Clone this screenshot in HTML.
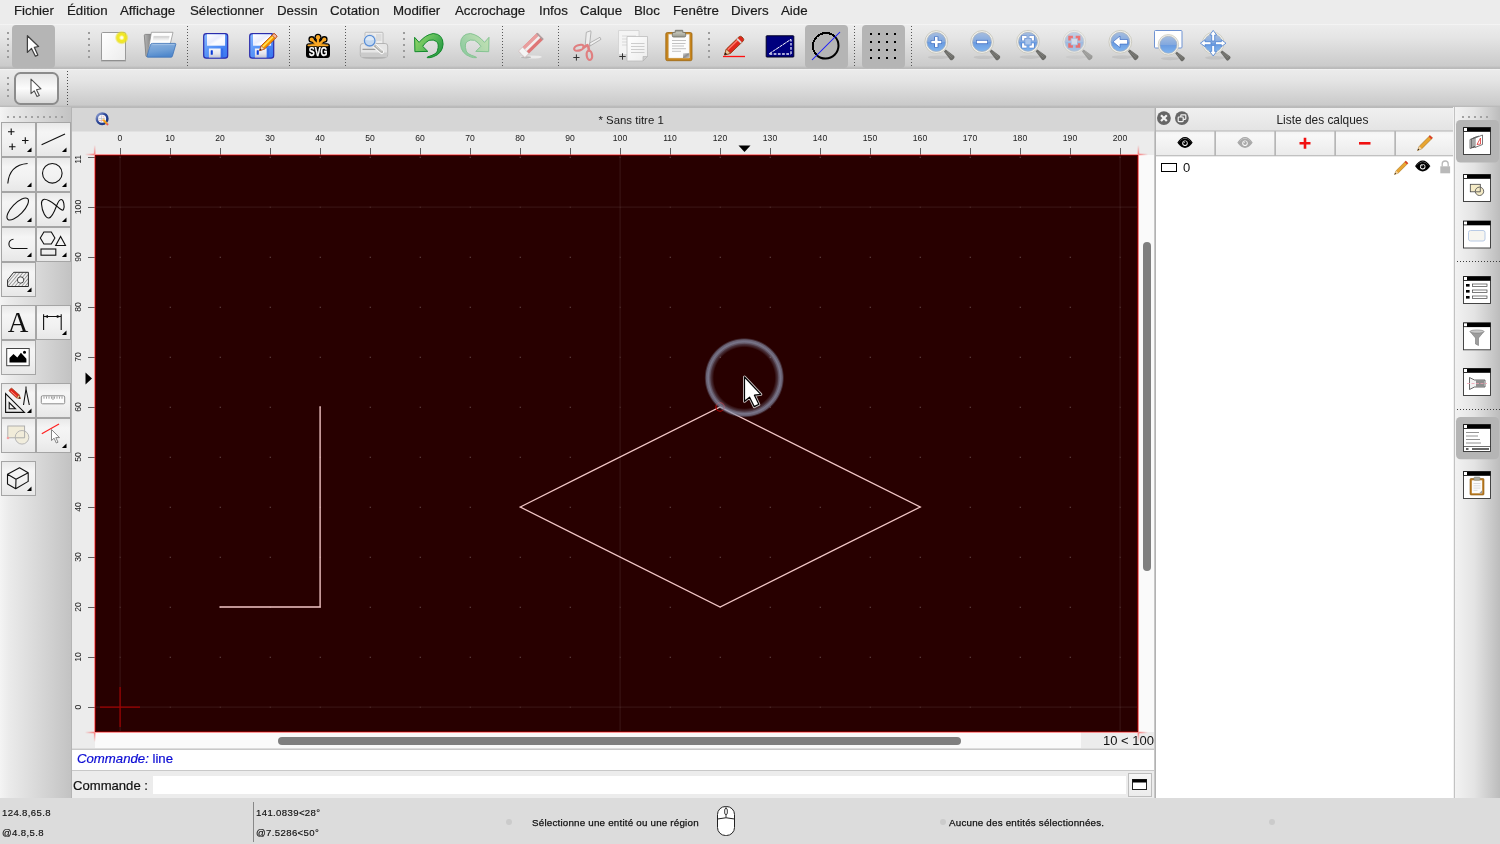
<!DOCTYPE html>
<html><head><meta charset="utf-8"><title>QCAD</title>
<style>
*{box-sizing:border-box;margin:0;padding:0}
html,body{width:1500px;height:844px;overflow:hidden;background:#dcdcdc;font-family:"Liberation Sans",sans-serif;color:#111}
.abs,#app *{position:absolute}
#app{position:relative;width:1500px;height:844px;overflow:hidden;will-change:transform}
#menubar{left:0;top:0;width:1500px;height:24px;background:#ececec}
#menubar span{top:2px;font-size:13.3px;line-height:17px;color:#1c1c1c;white-space:nowrap;-webkit-text-stroke:.2px #1c1c1c}
#tb1{left:0;top:24px;width:1500px;height:45px;background:linear-gradient(#f7f7f7 0,#ececec 1.5px,#e5e5e5 30%,#d4d4d4 70%,#cbcbcb 93%,#bcbcbc 97%,#b9b9b9 100%)}
#tb2{left:0;top:69px;width:1500px;height:39px;background:linear-gradient(#f5f5f5 0,#ebebeb 1.5px,#e4e4e4 30%,#d3d3d3 70%,#cacaca 92%,#bbbbbb 96%,#b8b8b8 100%)}
.sepv{width:1px;border-left:1px dotted #555;top:4px;height:38px}
.grip{width:2px;top:9px;height:28px;background-image:radial-gradient(circle,#9a9a9a 0.9px,transparent 1.2px);background-size:2px 6px}
#leftpanel{left:0;top:107px;width:72px;height:691px;background:linear-gradient(90deg,#f4f4f4 0,#ebebeb 12%,#dddddd 42%,#cecece 75%,#c2c2c2 100%)}
.tbtn{width:35px;height:35px;background:linear-gradient(#fbfbfb,#ececec);border:1px solid #b9b9b9}
#tabbar{left:72px;top:108px;width:1082px;height:23px;background:#d6d6d6}
#rulerh{left:72px;top:131px;width:1082px;height:24px;background:#ececec;overflow:hidden}
#rulerv{left:72px;top:155px;width:23px;height:593px;background:#ececec;overflow:hidden}
.th{width:1px;height:7px;top:17px;background:#606060}
.lh{width:40px;text-align:center;top:1px;font-size:8.6px;line-height:12px;color:#222}
.tv{height:1px;width:7px;left:16px;background:#606060}
.lv{width:40px;height:12px;text-align:center;font-size:8.6px;line-height:12px;color:#222;left:-14px;transform:rotate(-90deg);transform-origin:50% 50%;margin-top:14px}
#canvas{left:95px;top:155px;width:1043px;height:577px;background:#280000;overflow:hidden}
#vscroll{left:1139px;top:155px;width:15px;height:577px;background:#fafafa}
#hscroll{left:95px;top:732px;width:986px;height:16px;background:#fafafa}
#zoomlbl{left:1081px;top:732px;width:73px;height:16px;background:#ececec;font-size:13px;line-height:16px;text-align:right;padding-right:1px;color:#111}
#cmdhist{left:72px;top:749px;width:1082px;height:22px;background:#fff;border-top:1px solid #c8c8c8;border-bottom:1px solid #c8c8c8}
#cmdline{left:72px;top:771px;width:1082px;height:27px;background:#ececec}
#status{left:0;top:798px;width:1500px;height:46px;background:#dcdcdc}
#status span{font-size:9.6px;color:#111;white-space:nowrap;letter-spacing:.36px;-webkit-text-stroke:.15px #111}
#rightpanel{left:1155px;top:108px;width:299px;height:690px;background:#fff}
#rptitle{left:1px;top:0;width:298px;height:22px;background:linear-gradient(#f0f0f0,#e4e4e4);font-size:11.9px;line-height:22px;color:#222}
.lbtn{top:23px;height:25px;width:59px;background:linear-gradient(#f7f7f7,#ebebeb);border:1px solid #c4c4c4}
#righttb{left:1453px;top:107px;width:47px;height:691px;background:linear-gradient(90deg,#f2f2f2 2px,#e4e4e4 45%,#bcbcbc)}
.wbtn{left:9px;width:30px;height:30px;background:#fff;border:1px solid #444}
.wbtn:before{content:"";position:absolute;left:0;top:0;right:0;height:4px;background:#000}
.wbtn:after{content:"";position:absolute;left:0;top:0;width:3px;height:3px;background:#fff;border-right:1px solid #000;border-bottom:1px solid #000}
.sel{background:#bcbcbc;border-radius:5px}
svg{overflow:visible}
</style></head><body>
<div id="app">

<!-- MENUBAR -->
<div id="menubar">
<span style="left:14px">Fichier</span>
<span style="left:67px">Édition</span>
<span style="left:120px">Affichage</span>
<span style="left:190px">Sélectionner</span>
<span style="left:277px">Dessin</span>
<span style="left:330px">Cotation</span>
<span style="left:393px">Modifier</span>
<span style="left:455px">Accrochage</span>
<span style="left:539px">Infos</span>
<span style="left:580px">Calque</span>
<span style="left:634px">Bloc</span>
<span style="left:673px">Fenêtre</span>
<span style="left:731px">Divers</span>
<span style="left:781px">Aide</span>
</div>

<!-- TOOLBAR 1 -->
<div id="tb1">
<svg style="left:0;top:-1px" width="1500" height="46" viewBox="0 23 1500 46">
<defs>
<linearGradient id="gBlue" x1="0" y1="0" x2="0" y2="1"><stop offset="0" stop-color="#a5bde0"/><stop offset=".5" stop-color="#82a8de"/><stop offset=".52" stop-color="#6a9be0"/><stop offset="1" stop-color="#80b4ee"/></linearGradient>
<linearGradient id="gFlop" x1="0" y1="0" x2="1" y2=".8"><stop offset="0" stop-color="#8dbbff"/><stop offset=".45" stop-color="#5a96f8"/><stop offset="1" stop-color="#3b78f0"/></linearGradient><linearGradient id="gLbl" x1="0" y1="0" x2="1" y2="1"><stop offset="0" stop-color="#fff"/><stop offset=".45" stop-color="#e9ecfd"/><stop offset=".6" stop-color="#fbfbff"/><stop offset="1" stop-color="#f2f4ff"/></linearGradient><linearGradient id="gShut" x1="0" y1="0" x2="0" y2="1"><stop offset="0" stop-color="#f6f6fa"/><stop offset=".6" stop-color="#e2e2ea"/><stop offset="1" stop-color="#c2c2d0"/></linearGradient>
<linearGradient id="gPage" x1="0" y1="0" x2="1" y2="1"><stop offset="0" stop-color="#ffffff"/><stop offset="1" stop-color="#ececec"/></linearGradient>
<radialGradient id="gGlow"><stop offset="0" stop-color="#fff"/><stop offset=".15" stop-color="#fffde0"/><stop offset=".4" stop-color="#f4ea20"/><stop offset=".7" stop-color="#ece21c" stop-opacity=".9"/><stop offset="1" stop-color="#e8dc2a" stop-opacity="0"/></radialGradient>
<linearGradient id="gFolder" x1="0" y1="0" x2=".3" y2="1"><stop offset="0" stop-color="#8db2de"/><stop offset=".6" stop-color="#6f9fd6"/><stop offset="1" stop-color="#5088cc"/></linearGradient>
<linearGradient id="gGreen" x1="0" y1="0" x2="1" y2=".6"><stop offset="0" stop-color="#9bd868"/><stop offset=".55" stop-color="#5fbd5c"/><stop offset="1" stop-color="#2c9c45"/></linearGradient>
<linearGradient id="gGreenL" x1="0" y1="0" x2="1" y2=".6"><stop offset="0" stop-color="#c5e3b5"/><stop offset=".55" stop-color="#add7ac"/><stop offset="1" stop-color="#8fcba0"/></linearGradient>
<g id="lens">
<ellipse cx="2" cy="15.300" rx="10.500" ry="1.800" fill="#000" opacity=".07"/>
<path d="M7.600 9.400l1.800-1.800 8.300 6.200q1.300 1.300 0 2.600l-1.300 1.300q-1.300 1.300-2.600 0z" fill="#6b6b67"/>
<path d="M9.500 10.300l6 5.300M10.800 9.300l5.700 5" stroke="#8b8b86" stroke-width=".7"/>
<circle r="11.400" fill="#f1f0ea" stroke="#c4c3b7" stroke-width=".8"/>
<circle r="9.500" fill="url(#gBlue)" stroke="#a3adba" stroke-width=".7"/>
</g>
<g id="grip5" fill="#9c9c9c"><rect x="0" y="32" width="2" height="2"/><rect x="0" y="38" width="2" height="2"/><rect x="0" y="44" width="2" height="2"/><rect x="0" y="50" width="2" height="2"/><rect x="0" y="56" width="2" height="2"/></g>
<path id="sepd" d="M.5 26V67" stroke="#565656" stroke-width="1" stroke-dasharray="1 2" shape-rendering="crispEdges"/>
</defs>

<!-- pointer selected -->
<rect x="12" y="25" width="43" height="43" rx="4" fill="#b5b5b5"/>
<path d="M27.400 35.700V52.400L31.500 48.500L35.400 56.200L37.800 55.100L34.300 47.300L38.600 46.500Z" fill="#fff" stroke="#404040" stroke-width="1.250" stroke-linejoin="round"/>
<use href="#grip5" x="7"/>
<use href="#grip5" x="88"/>

<!-- new -->
<g>
<rect x="101.5" y="32.5" width="24" height="28" rx="1.2" fill="url(#gPage)" stroke="#9a9a9a" stroke-width="1"/>
<path d="M101 60.8h25" stroke="#8a8a8a" stroke-width="1"/>
<circle cx="121.7" cy="37.7" r="7" fill="url(#gGlow)"/>
</g>

<!-- open -->
<g>
<defs><linearGradient id="gBack" x1="0" y1="0" x2="1" y2="0"><stop offset="0" stop-color="#b5b5b5"/><stop offset="1" stop-color="#7e7e7e"/></linearGradient>
<linearGradient id="gPap" x1="0" y1="0" x2="0" y2="1"><stop offset="0" stop-color="#fff"/><stop offset=".25" stop-color="#c9c9c9"/><stop offset=".55" stop-color="#e2e2e2"/><stop offset="1" stop-color="#fafafa"/></linearGradient></defs>
<path d="M144.300 35.500q0-1.100 1.100-1.100h6.500l-3.500 22.200h-1.600q-.8 0-.9-.8z" fill="url(#gBack)" stroke="#6f6f6f" stroke-width=".7"/>
<path d="M151.400 32.300h21.600l-2.700 11.500-22.500 9.500z" fill="#fdfdfd" stroke="#8d8d8d" stroke-width=".7" stroke-linejoin="round"/>
<path d="M153.800 35.300h16l-1.300 5.600h-15.900z" fill="url(#gPap)" opacity=".9"/>
<path d="M152.600 43.400h22.400q1 0 .8 1l-3.400 11.800q-.3 1-1.300 1h-23.300q-1 0-.8-1l3.400-11.500q.4-1.300 2.200-1.300z" fill="url(#gFolder)" stroke="#3f74b8" stroke-width=".8"/>
<path d="M152.300 44.600h22.200" stroke="#a9c6e8" stroke-width=".8"/>
</g>
<use href="#sepd" x="187"/>

<!-- save -->
<g id="floppy">
<rect x="203.700" y="33.600" width="24" height="24.600" rx="2.600" fill="url(#gFlop)" stroke="#2b2bab" stroke-width="1.200"/>
<rect x="221" y="48.500" width="2.200" height="9" fill="#2f66e8" opacity=".8"/>
<path d="M207 34.300h18.100v11.400h-18.100z" fill="url(#gLbl)"/>
<path d="M208.900 48.500h11.700v9.100h-11.700z" fill="url(#gShut)"/>
<rect x="210.700" y="50.300" width="2.100" height="4.500" rx=".5" fill="#0a3ad8"/>
</g>
<!-- save as -->
<use href="#floppy" x="46"/>
<g transform="translate(259.600,50.600) rotate(-44.500)">
<path d="M0 0l4.600-2.300h16.200q1.800 0 1.800 1.200v2.200q0 1.200-1.800 1.200h-16.200z" fill="#ffb400" stroke="#b23a08" stroke-width=".8" stroke-linejoin="round"/>
<path d="M4.800-.5h15" stroke="#ffe36a" stroke-width="1.300"/>
<path d="M4.800 1.300h15" stroke="#f08a00" stroke-width="1"/>
<path d="M19.600-2.300h1.200q1.800 0 1.800 1.200v2.200q0 1.200-1.800 1.200h-1.200z" fill="#f3b69a" stroke="#b23a08" stroke-width=".6"/>
<path d="M0 0l4.600-2.300v4.600z" fill="#f6dfc0" stroke="#b23a08" stroke-width=".5"/><path d="M0 0l1.900-.95v1.900z" fill="#2a2a2a"/>
</g>
<use href="#sepd" x="289"/>

<!-- SVG -->
<g>
<g fill="#000" stroke="#000" stroke-width="2.400" stroke-linecap="round">
<circle cx="318" cy="37.200" r="2.300"/><circle cx="311.700" cy="39.400" r="2.100"/><circle cx="324.300" cy="39.400" r="2.100"/>
<path d="M318 37.200v8M311.700 39.400l6.300 6M324.300 39.400l-6.300 6" stroke-width="4.600"/>
</g>
<rect x="306" y="43.300" width="24" height="14.700" rx="3.200" fill="#000"/>
<g fill="#f9a825"><circle cx="318" cy="37.200" r="2.200"/><circle cx="311.700" cy="39.400" r="2"/><circle cx="324.300" cy="39.400" r="2"/></g>
<path d="M318 37.200v8M311.700 39.400l5.800 5.600M324.300 39.400l-5.800 5.600" stroke="#f9a825" stroke-width="2.400" stroke-linecap="round"/>
<path d="M308.300 45.300h19.400" stroke="#f9a825" stroke-width="1.700" stroke-linecap="round"/>
<path d="M309.500 44.800q8.500-3.500 17 0z" fill="#f9a825"/>
<text x="318.100" y="56.100" font-family="Liberation Sans, sans-serif" font-weight="bold" font-size="12.400" fill="#fff" stroke="#fff" stroke-width=".25" text-anchor="middle" textLength="18.800" lengthAdjust="spacingAndGlyphs">SVG</text>
</g>
<use href="#sepd" x="345"/>

<!-- print preview -->
<g>
<rect x="365" y="32.300" width="18" height="13" rx=".8" fill="#ededed" stroke="#b0b0b0" stroke-width=".8"/>
<rect x="376" y="34" width="5.500" height="7" fill="#dcdcdc"/>
<ellipse cx="374" cy="57.800" rx="12" ry="1.500" fill="#000" opacity=".13"/>
<path d="M360.300 46q0-2.500 2.500-2.500h22.400q2.500 0 2.500 2.500v9q0 2.300-2.300 2.300h-22.800q-2.300 0-2.300-2.300z" fill="#e6e6e6" stroke="#a8a8a8" stroke-width=".8"/>
<path d="M360.700 52.500h26.600v2.700q0 1.800-1.900 1.800h-22.800q-1.900 0-1.900-1.800z" fill="#cbcbcb"/>
<path d="M362.500 49.300h13" stroke="#8e8e8e" stroke-width="1.100"/>
<path d="M374.500 45.500l7.300 6.300" stroke="#fff" stroke-width="4.400" stroke-linecap="round"/>
<path d="M374.800 45.800l7 6" stroke="#b3b3b0" stroke-width="2.800" stroke-linecap="round"/>
<path d="M376 46l5.500 4.700" stroke="#dededc" stroke-width="1" stroke-linecap="round"/>
<circle cx="369.700" cy="40.700" r="6.600" fill="#f3f3f3" stroke="#d5d5d5" stroke-width=".6"/>
<circle cx="369.700" cy="40.700" r="5.300" fill="#c3d8f0" stroke="#5b8fd6" stroke-width="1.300"/>
<path d="M365.300 39.800a4.500 4.500 0 0 1 8.800 0q-4.400 1.600-8.800 0z" fill="#e3edf9" opacity=".8"/>
</g>
<use href="#grip5" x="403"/>

<!-- undo -->
<path d="M414.600 37.300L419.100 42.400Q425 35 433.200 33.500Q443 34 443.100 44.200Q442.500 53.500 433.200 56.800Q430 58 427.200 57.700Q427 57 428 56.800Q437 54 437.400 50.800Q439.500 44 436.500 41.500Q433.800 39.200 429 40.300Q425 42.500 422.700 46.300L427.800 51.400L414.900 51.700Z" fill="url(#gGreen)" stroke="#138a2c" stroke-width="1" stroke-linejoin="round"/>
<!-- redo -->
<g transform="translate(903.600,0) scale(-1,1)"><path d="M414.600 37.300L419.100 42.400Q425 35 433.200 33.500Q443 34 443.100 44.200Q442.500 53.500 433.200 56.800Q430 58 427.200 57.700Q427 57 428 56.800Q437 54 437.400 50.800Q439.500 44 436.500 41.500Q433.800 39.200 429 40.300Q425 42.500 422.700 46.300L427.800 51.400L414.900 51.700Z" fill="url(#gGreenL)" stroke="#86c493" stroke-width="1" stroke-linejoin="round"/></g>
<use href="#sepd" x="502"/>

<!-- eraser -->
<g>
<ellipse cx="531" cy="57" rx="11" ry="1.600" fill="#fff" opacity=".55"/>
<ellipse cx="526" cy="57.300" rx="5" ry="1.100" fill="#000" opacity=".22"/>
<g transform="translate(521.700,54.300) rotate(-44.400)">
<rect x="0" y="-4.500" width="26.300" height="9" rx=".8" fill="#de7676"/>
<rect x="0" y="-4.500" width="26.300" height="3.200" fill="#e99e9e"/>
<rect x="0" y="-1.400" width="26.300" height="2.700" fill="#f1efef"/>
<rect x="24.800" y="-4.500" width="1.500" height="9" fill="#a9a0a0"/>
<rect x="0" y="-4.500" width="5.600" height="9" fill="#f4f4f4" stroke="#c4c4c4" stroke-width=".5"/>
</g>
</g>
<use href="#sepd" x="558"/>

<!-- cut -->
<g>
<path d="M585.300 44.700l1-12.400 4.400-1.500.3 1.200-1.700 14.700z" fill="#eeeeee" stroke="#9c9c9c" stroke-width=".7" stroke-linejoin="round"/>
<path d="M589.700 43l10.300-5.700 1 2-11 6.700z" fill="#f0f0f0" stroke="#9c9c9c" stroke-width=".7" stroke-linejoin="round"/>
<path d="M583.500 47.500l4-2.300M588.300 46.500l.7 4" stroke="#e07f80" stroke-width="2.600" stroke-linecap="round"/>
<ellipse cx="579" cy="47.800" rx="5" ry="2.700" transform="rotate(-17 579 47.800)" fill="none" stroke="#e07f80" stroke-width="2.200"/>
<ellipse cx="589.400" cy="55.300" rx="2.700" ry="4.700" transform="rotate(-8 589.400 55.300)" fill="none" stroke="#e07f80" stroke-width="2.200"/>
<path d="M573.300 57.500h6.200M576.400 54.400v6.200" stroke="#333" stroke-width="1"/>
</g>

<!-- copy -->
<g>
<path d="M618.500 30.500h20.500v24h-20.500z" fill="#f4f4f4" stroke="#d0d0d0" stroke-width=".8"/>
<path d="M622 36h14M622 39h14M622 42h14M622 45h14" stroke="#d8d8d8" stroke-width="1"/>
<path d="M627 36.500h20.500v20l-4.500 4.500h-16z" fill="url(#gPage)" stroke="#bdbdbd" stroke-width=".8"/>
<path d="M647.500 56.500h-4.500v4.500z" fill="#cfcfcf" stroke="#b0b0b0" stroke-width=".6"/>
<path d="M631 43.500h13.500M631 46.500h13.500M631 49.500h13.500M631 52.500h13.500" stroke="#cdcdcd" stroke-width="1.100"/>
<path d="M619.300 56.500h6.400M622.500 53.300v6.400" stroke="#333" stroke-width="1"/>
</g>

<!-- paste -->
<g>
<defs><linearGradient id="gClip" x1="0" y1="0" x2="0" y2="1"><stop offset="0" stop-color="#8d8e84"/><stop offset=".35" stop-color="#c2c3b8"/><stop offset="1" stop-color="#96978c"/></linearGradient>
<linearGradient id="gCurl" x1="0" y1="0" x2="1" y2="1"><stop offset="0" stop-color="#d9d9d9"/><stop offset=".5" stop-color="#8d8d8d"/><stop offset="1" stop-color="#c9c9c9"/></linearGradient></defs>
<rect x="665.800" y="32.500" width="26.200" height="28.200" rx="1.600" fill="#c7851d" stroke="#9a6412" stroke-width=".8"/>
<path d="M668.700 34.300h20.600v23.700h-20.600z" fill="#fcfcfc" stroke="#e2d6c0" stroke-width=".5"/>
<path d="M672 40.500h14M672 43.500h13.500M672 46h12M672 48.700h14M672 51.300h9" stroke="#c2c2c2" stroke-width="1"/>
<path d="M683 58v-4.800h6.300v4.800z" fill="url(#gCurl)"/>
<path d="M672.300 34q0-1.700 1.700-1.700h1.300v-2h7.400v2h1.300q1.700 0 1.700 1.700v1.800q0 1.200-1.200 1.200h-11q-1.200 0-1.200-1.200z" fill="url(#gClip)" stroke="#6e6f66" stroke-width=".8"/>
</g>
<use href="#grip5" x="708"/>

<!-- pencil red -->
<g>
<path d="M723 56.500h22" stroke="#ff1010" stroke-width="1.300"/>
<g transform="translate(724.500,55) rotate(-44)">
<path d="M0 0l5.500-3h17q2.600 0 2.600 2.100v1.800q0 2.100-2.600 2.100h-17z" fill="#e0271c" stroke="#8a3a10" stroke-width=".8" stroke-linejoin="round"/>
<path d="M6-1.600h14" stroke="#ff7a6a" stroke-width="1.300"/>
<path d="M19.500-3h1.800v6h-1.800z" fill="#d9d9d9"/>
<path d="M0 0l5.500-3v6z" fill="#e9c79a" stroke="#8a3a10" stroke-width=".6"/><path d="M0 0l2.400-1.300v2.600z" fill="#111"/>
</g>
</g>

<!-- blue rect -->
<g>
<rect x="766.200" y="35.800" width="27.600" height="21.200" rx=".6" fill="#00007e" stroke="#000024" stroke-width="1"/>
<path d="M769.300 53.700l21.700-14.400" stroke="#fff" stroke-width="1" stroke-dasharray="3.500 .6"/>
<path d="M769.500 54h21.500M791 54v-14.500" stroke="#e4e4fa" stroke-width="1.300" stroke-dasharray="2.700 1.500"/>
</g>

<!-- circle slash selected -->
<rect x="805" y="25" width="43" height="43" rx="4" fill="#b5b5b5"/>
<path d="M816.510 54.990A13 13 0 0 1 834.890 36.610" fill="none" stroke="#000" stroke-width="2" shape-rendering="crispEdges"/><path d="M834.890 36.610A13 13 0 0 1 816.510 54.990" fill="none" stroke="#000" stroke-width="2"/>
<path d="M812 60l28-28" stroke="#1414ff" stroke-width="1.050"/>
<use href="#sepd" x="854"/>

<!-- grid selected -->
<rect x="862" y="25" width="43" height="43" rx="4" fill="#b5b5b5"/>
<g fill="#000" shape-rendering="crispEdges">
<rect x="870" y="33" width="2" height="2"/><rect x="878" y="33" width="2" height="2"/><rect x="886" y="33" width="2" height="2"/><rect x="894" y="33" width="2" height="2"/>
<rect x="870" y="41" width="2" height="2"/><rect x="878" y="41" width="2" height="2"/><rect x="886" y="41" width="2" height="2"/><rect x="894" y="41" width="2" height="2"/>
<rect x="870" y="49" width="2" height="2"/><rect x="878" y="49" width="2" height="2"/><rect x="886" y="49" width="2" height="2"/><rect x="894" y="49" width="2" height="2"/>
<rect x="870" y="57" width="2" height="2"/><rect x="878" y="57" width="2" height="2"/><rect x="886" y="57" width="2" height="2"/><rect x="894" y="57" width="2" height="2"/>
</g>
<use href="#sepd" x="911"/>

<!-- zoom in -->
<g transform="translate(936.300,42)"><use href="#lens"/><path d="M-5.500 0h11M0-5.500v11" stroke="#3d6cc0" stroke-width="4.200"/><path d="M-5 0h10M0-5v10" stroke="#fff" stroke-width="2.600"/></g>
<!-- zoom out -->
<g transform="translate(982,42)"><use href="#lens"/><path d="M-5.800 0h11.600" stroke="#3d6cc0" stroke-width="4.200"/><path d="M-5.200 0h10.400" stroke="#fff" stroke-width="2.600"/></g>
<!-- zoom auto -->
<g transform="translate(1028,41.800)"><use href="#lens"/><rect x="-2.700" y="-2.700" width="5.400" height="5.400" fill="#aac5ea"/><path d="M-4.800-1.400V-4.800H-1.400M1.400-4.800H4.800V-1.400M4.800 1.400V4.800H1.400M-1.400 4.800H-4.800V1.400" fill="none" stroke="#3f6fc4" stroke-width="3.300"/><path d="M-4.800-1.400V-4.800H-1.400M1.400-4.800H4.800V-1.400M4.800 1.400V4.800H1.400M-1.400 4.800H-4.800V1.400" fill="none" stroke="#fff" stroke-width="2.300"/></g>
<!-- zoom selection (disabled) -->
<g transform="translate(1074.300,41.800)" opacity=".55"><use href="#lens"/><rect x="-2.700" y="-2.700" width="5.400" height="5.400" fill="#c9d9f0"/><path d="M-4.800-1.400V-4.800H-1.400M1.400-4.800H4.800V-1.400M4.800 1.400V4.800H1.400M-1.400 4.800H-4.800V1.400" fill="none" stroke="#f01818" stroke-width="2.500"/></g>
<!-- zoom previous -->
<g transform="translate(1120.300,41.800)"><use href="#lens"/><path d="M-7.300 0L-.3-5.800V-2.300H7.300V2.300H-.3V5.800Z" fill="#fff" stroke="#3f6fc4" stroke-width=".7" stroke-linejoin="round"/></g>
<!-- zoom window -->
<g>
<rect x="1154.500" y="30.500" width="27.500" height="17.500" rx="1" fill="#fff" stroke="#6f93d3" stroke-width="1"/>
<g transform="translate(1168.400,44.800) scale(.9)"><use href="#lens"/></g>
</g>
<!-- zoom pan -->
<g transform="translate(1213.200,43.200)"><g transform="scale(.95)"><use href="#lens"/></g>
<g fill="#fff" stroke="#4a7fd0" stroke-width=".8" stroke-linejoin="round"><path d="M-1.500-2.200V-8.200H-3.400L0-12.800L3.400-8.200H1.500V-2.200Z"/><path d="M-1.500-2.200V-8.200H-3.400L0-12.800L3.400-8.200H1.500V-2.200Z" transform="rotate(90)"/><path d="M-1.500-2.200V-8.200H-3.400L0-12.800L3.400-8.200H1.500V-2.200Z" transform="rotate(180)"/><path d="M-1.500-2.200V-8.200H-3.400L0-12.800L3.400-8.200H1.500V-2.200Z" transform="rotate(270)"/></g>
</g>
</svg>

</div>

<!-- TOOLBAR 2 -->
<div id="tb2">
<svg style="left:0;top:0" width="1500" height="38" viewBox="0 69 1500 38">
<g fill="#9c9c9c"><rect x="7" y="77" width="2" height="2"/><rect x="7" y="83" width="2" height="2"/><rect x="7" y="89" width="2" height="2"/><rect x="7" y="95" width="2" height="2"/></g>
<defs><linearGradient id="gBtn" x1="0" y1="0" x2="0" y2="1"><stop offset="0" stop-color="#e4e4e4"/><stop offset=".5" stop-color="#fcfcfc"/><stop offset="1" stop-color="#d6d6d6"/></linearGradient></defs>
<rect x="15" y="73" width="43" height="31" rx="5.500" fill="url(#gBtn)" stroke="#8c8c8c" stroke-width="2"/>
<path d="M31 79.200V93.600L34.200 90.800L37 96.600L39.300 95.600L36.500 89.800L41 88.800Z" fill="#fff" stroke="#505050" stroke-width="1.100" stroke-linejoin="round"/>
<path d="M67.500 71V105" stroke="#4a4a4a" stroke-width="1" stroke-dasharray="1 2" shape-rendering="crispEdges"/>
</svg>

</div>

<!-- LEFT PANEL -->
<div id="leftpanel">
<svg style="left:0;top:0" width="72" height="691" viewBox="0 107 72 691">
<defs>
<linearGradient id="gTB" x1="0" y1="0" x2="0" y2="1"><stop offset="0" stop-color="#e8e8e8"/><stop offset=".28" stop-color="#f5f5f5"/><stop offset=".6" stop-color="#f1f1f1"/><stop offset="1" stop-color="#e7e7e7"/></linearGradient>
<g id="tb"><rect x=".5" y=".5" width="34" height="34" fill="url(#gTB)" stroke="#a5a5a5" stroke-width="1"/></g>
<path id="tri" d="M0 0v-4.600l-4.600 4.600z" fill="#000"/>
<pattern id="hat" width="2.600" height="2.600" patternUnits="userSpaceOnUse" patternTransform="rotate(-50)"><rect width="2.600" height="2.600" fill="#f0f0f0"/><rect width="2.600" height=".6" fill="#707070"/></pattern>
</defs>
<g fill="#a2a2a2"><rect x="7" y="116" width="2" height="2"/><rect x="13" y="116" width="2" height="2"/><rect x="19" y="116" width="2" height="2"/><rect x="25" y="116" width="2" height="2"/><rect x="31" y="116" width="2" height="2"/><rect x="37" y="116" width="2" height="2"/><rect x="43" y="116" width="2" height="2"/><rect x="49" y="116" width="2" height="2"/><rect x="55" y="116" width="2" height="2"/><rect x="61" y="116" width="2" height="2"/></g>
<rect x="71" y="107" width="1" height="691" fill="#b4b4b4"/>
<!-- buttons -->
<use href="#tb" x="1" y="122"/><use href="#tb" x="36" y="122"/>
<use href="#tb" x="1" y="157"/><use href="#tb" x="36" y="157"/>
<use href="#tb" x="1" y="192"/><use href="#tb" x="36" y="192"/>
<use href="#tb" x="1" y="227"/><use href="#tb" x="36" y="227"/>
<use href="#tb" x="1" y="262"/>
<use href="#tb" x="1" y="305"/><use href="#tb" x="36" y="305"/>
<use href="#tb" x="1" y="340"/>
<use href="#tb" x="1" y="383"/><use href="#tb" x="36" y="383"/>
<use href="#tb" x="1" y="418"/><use href="#tb" x="36" y="418"/>
<use href="#tb" x="1" y="461"/>
<!-- triangles -->
<use href="#tri" x="31.500" y="152"/><use href="#tri" x="66.500" y="152"/>
<use href="#tri" x="31.500" y="187"/><use href="#tri" x="66.500" y="187"/>
<use href="#tri" x="31.500" y="222"/><use href="#tri" x="66.500" y="222"/>
<use href="#tri" x="31.500" y="257"/><use href="#tri" x="66.500" y="257"/>
<use href="#tri" x="31.500" y="292"/>
<use href="#tri" x="66.500" y="335"/>
<use href="#tri" x="31.500" y="413"/>
<use href="#tri" x="66.500" y="448"/>
<use href="#tri" x="31.500" y="491"/>
<!-- points -->
<g stroke="#111" stroke-width="1.100" fill="none">
<path d="M8 131.700h6.500M11.200 128.500v6.500M22 140.500h6.500M25.300 137.200v6.500M9 146.700h6.500M12.200 143.500v6.500"/>
<!-- line -->
<path d="M41.600 144.800L65 134"/>
<!-- arc -->
<path d="M7.800 183.500q1.500-18.500 19.800-20"/>
<!-- circle -->
<circle cx="52.300" cy="173.300" r="9.800"/>
<!-- ellipse -->
<ellipse cx="17.700" cy="209" rx="14.300" ry="5.700" transform="rotate(-46 17.700 209)"/>
<!-- spline -->
<path d="M41.500 204C42 212 46 218.500 49 218C52 217.500 55 210 56.500 206C58 202 60 199 61.500 199.500C63.500 200 65 206 63.500 209.500C62.500 211.500 59 208 56 205.500C52 202 46 198.500 43.500 199.500C41.500 200.500 41.300 202 41.500 204Z"/>
<!-- polyline J -->
<path d="M13.500 239.300a4.500 4.500 0 0 0 0 9.200h14"/>
<!-- shapes -->
<path d="M40.300 238l3.600-6h7.400l3.600 6-3.600 6h-7.400z"/>
<path d="M60.600 236.500l4.900 9h-9.800z"/>
<rect x="41" y="249" width="14.800" height="6.200"/>
</g>
<!-- hatch -->
<path d="M7.600 280l6.100-7.700h14.700v14.200h-20.800z" fill="url(#hat)" stroke="#2a2a2a" stroke-width="1"/>
<circle cx="20.600" cy="280" r="3.200" fill="#f4f4f4" stroke="#2a2a2a" stroke-width=".85"/>
<!-- A -->
<text x="18" y="331.800" font-family="Liberation Serif, serif" font-size="28.500" text-anchor="middle" fill="#111">A</text>
<!-- dimension -->
<g stroke="#111" stroke-width="1.100" fill="none"><path d="M43.600 314.300v15.700M61.200 314.300v15.700M44 316.500h17"/></g>
<path d="M43.800 316.500l4.200-1.600v3.200zM61 316.500l-4.200-1.600v3.200z" fill="#111"/>
<!-- image -->
<rect x="6.700" y="348.500" width="22.500" height="17.200" fill="#fff" stroke="#444" stroke-width="1"/>
<path d="M9.500 362.500v-4.500l4-4 3.800 3.500 3.600-4.800 5.500 6v3.800z" fill="#000"/>
<circle cx="24.500" cy="352.300" r="1.500" fill="#000"/>
<!-- set square + pencil + compass -->
<g stroke="#111" stroke-width="1.100" fill="none" stroke-linejoin="miter">
<path d="M5.600 393.500v18.900h18.800z"/><path d="M9.200 402.500v6.300h6.300z"/>
<path d="M26 389l-2.500 16M26 389l3.300 16M26 386.500v3.500"/>
</g>
<g transform="translate(20.300,398.500) rotate(-138)">
<path d="M0 0l3.500-2h9q1.300 0 1.300 1v2q0 1-1.300 1h-9z" fill="#e0271c" stroke="#8a3a10" stroke-width=".6"/>
<path d="M4-.8h8" stroke="#ff8a7a" stroke-width=".9"/>
<path d="M0 0l3.500-2v4z" fill="#e9c79a" stroke="#8a3a10" stroke-width=".5"/><path d="M0 0l1.500-.9v1.800z" fill="#111"/>
</g>
<!-- ruler -->
<rect x="41.300" y="395.800" width="23.400" height="8" rx="1.200" fill="#fcfcfc" stroke="#8c8c8c" stroke-width="1"/>
<path d="M44 396.500v2.200M46.500 396.500v2.200M49 396.500v2.200M51.500 396.500v2.200M53 396.500v3.500M54.500 396.500v2.200M57 396.500v2.200M59.500 396.500v2.200M62 396.500v2.200" stroke="#777" stroke-width=".7"/>
<!-- block/circle (disabled) -->
<rect x="7.800" y="426" width="16.800" height="11.800" fill="#f1ecd9" stroke="#a8a8a8" stroke-width=".9"/>
<circle cx="22" cy="437.300" r="6.800" fill="#f1ecd9" fill-opacity=".85" stroke="#b0b0b0" stroke-width=".9"/>
<path d="M24.600 430.500v7.300h-9.300" fill="none" stroke="#a8a8a8" stroke-width=".9"/>
<circle cx="8" cy="438" r="1.300" fill="#f2a0a0"/>
<!-- line + cursor -->
<path d="M41.800 433.800L59 424" stroke="#ff2020" stroke-width="1.200"/>
<path d="M51.500 429.500v11l2.600-2.300 2.200 4.800 1.700-.8-2.200-4.600h3.700z" fill="#fff" stroke="#777" stroke-width=".9" stroke-linejoin="round"/>
<!-- cube -->
<g stroke="#111" stroke-width="1.100" fill="none" stroke-linejoin="round"><path d="M19.500 467.700l8.700 5-12.200 6.600-8.500-5.100zM7.500 474.200v9.800l8.200 4.700 12.500-7.300v-8.700M16 479.300l-.3 9.400"/></g>
</svg>

</div>

<!-- TAB BAR -->
<div id="tabbar">
<span id="tabt" style="left:526.5px;top:1px;font-size:11.4px;line-height:23px;color:#1a1a1a;white-space:nowrap">* Sans titre 1</span>
<svg style="left:22px;top:2px" width="18" height="18" viewBox="94 110 18 18">
<defs><linearGradient id="gQ" x1="0" y1="0" x2="1" y2="1"><stop offset="0" stop-color="#9aa9d6"/><stop offset=".45" stop-color="#2a4596"/><stop offset="1" stop-color="#1c357f"/></linearGradient></defs>
<circle cx="102.100" cy="118.700" r="5.300" fill="#f4f4f6" stroke="url(#gQ)" stroke-width="2.500"/>
<path d="M101.500 115.500v6.500M98.500 118.500h6.500" stroke="#b9b9c4" stroke-width=".6"/>
<path d="M99 120.500h4M103 116l.8 1.500" stroke="#f0a0a8" stroke-width=".7"/>
<path d="M102.800 119.300l4.300 4.700" stroke="#f6a31c" stroke-width="2" stroke-linecap="butt"/>
<path d="M102.300 118.800l1.700.6-1.100 1.100z" fill="#fbe7b0"/>
<circle cx="107.400" cy="124.300" r="1.100" fill="#e8585a"/>
</svg>

</div>

<!-- RULERS -->
<div id="rulerh"><i style="left:0;top:0;width:1082px;height:1px;background:#e1e1e1"></i><i class="th" style="left:48px"></i><span class="lh" style="left:28px">0</span><i class="th" style="left:98px"></i><span class="lh" style="left:78px">10</span><i class="th" style="left:148px"></i><span class="lh" style="left:128px">20</span><i class="th" style="left:198px"></i><span class="lh" style="left:178px">30</span><i class="th" style="left:248px"></i><span class="lh" style="left:228px">40</span><i class="th" style="left:298px"></i><span class="lh" style="left:278px">50</span><i class="th" style="left:348px"></i><span class="lh" style="left:328px">60</span><i class="th" style="left:398px"></i><span class="lh" style="left:378px">70</span><i class="th" style="left:448px"></i><span class="lh" style="left:428px">80</span><i class="th" style="left:498px"></i><span class="lh" style="left:478px">90</span><i class="th" style="left:548px"></i><span class="lh" style="left:528px">100</span><i class="th" style="left:598px"></i><span class="lh" style="left:578px">110</span><i class="th" style="left:648px"></i><span class="lh" style="left:628px">120</span><i class="th" style="left:698px"></i><span class="lh" style="left:678px">130</span><i class="th" style="left:748px"></i><span class="lh" style="left:728px">140</span><i class="th" style="left:798px"></i><span class="lh" style="left:778px">150</span><i class="th" style="left:848px"></i><span class="lh" style="left:828px">160</span><i class="th" style="left:898px"></i><span class="lh" style="left:878px">170</span><i class="th" style="left:948px"></i><span class="lh" style="left:928px">180</span><i class="th" style="left:998px"></i><span class="lh" style="left:978px">190</span><i class="th" style="left:1048px"></i><span class="lh" style="left:1028px">200</span>
<svg style="left:665.600px;top:13.700px" width="14" height="8"><path d="M0.5 0.5h12l-6 6.5z" fill="#000"/></svg>
</div>
<div id="rulerv"><i class="tv" style="top:552px"></i><span class="lv" style="top:532px">0</span><i class="tv" style="top:502px"></i><span class="lv" style="top:482px">10</span><i class="tv" style="top:452px"></i><span class="lv" style="top:432px">20</span><i class="tv" style="top:402px"></i><span class="lv" style="top:382px">30</span><i class="tv" style="top:352px"></i><span class="lv" style="top:332px">40</span><i class="tv" style="top:302px"></i><span class="lv" style="top:282px">50</span><i class="tv" style="top:252px"></i><span class="lv" style="top:232px">60</span><i class="tv" style="top:202px"></i><span class="lv" style="top:182px">70</span><i class="tv" style="top:152px"></i><span class="lv" style="top:132px">80</span><i class="tv" style="top:102px"></i><span class="lv" style="top:82px">90</span><i class="tv" style="top:52px"></i><span class="lv" style="top:32px">100</span><i class="tv" style="top:2px"></i><span class="lv" style="top:-18px">110</span>

<svg style="left:12.600px;top:216.500px" width="8" height="14"><path d="M0.5 0.5v12l6.5-6z" fill="#000"/></svg>
</div>

<!-- CANVAS -->
<div id="canvas">
<svg style="left:0;top:0" width="1043" height="577" viewBox="95 155 1043 577">
<defs>
<pattern id="dots" x="119" y="156" width="50" height="50" patternUnits="userSpaceOnUse"><rect x=".700" y=".700" width="1.200" height="1.200" fill="#5e4444"/></pattern>
<radialGradient id="ring" cx="50%" cy="50%" r="50%">
<stop offset="0.76" stop-color="#8e93ab" stop-opacity="0"/>
<stop offset="0.84" stop-color="#8288a2" stop-opacity=".4"/>
<stop offset="0.90" stop-color="#8a90aa" stop-opacity=".78"/>
<stop offset="0.95" stop-color="#8288a2" stop-opacity=".62"/>
<stop offset="1" stop-color="#6a6f86" stop-opacity="0"/>
</radialGradient>
</defs>
<rect x="95" y="155" width="1043" height="577" fill="url(#dots)"/>
<g stroke="#3c1717" stroke-width="1">
<path d="M120.100 155V732M620.100 155V732M1120.100 155V732M95 207.100H1138M95 707.100H1138"/>
</g>
<g stroke="#a00000" stroke-width="1.200"><path d="M100 707.100H140M120.100 687V727"/></g>
<g stroke="#f2c6c6" stroke-width="1.350" fill="none">
<path d="M320.100 406.300V607.700M219.500 607H320.800"/>
<path d="M520.300 507L720.100 407L920.200 507L720.100 607Z"/>
</g>
<circle cx="720.100" cy="407" r="4.200" fill="none" stroke="#b80000" stroke-width="1.100"/>
<circle cx="744.300" cy="377.800" r="40" fill="url(#ring)"/><!--banding--><g fill="none" stroke="#aab0c8" stroke-opacity=".22" stroke-width=".6"><circle cx="744.300" cy="377.800" r="34.500"/><circle cx="744.300" cy="377.800" r="35.700"/><circle cx="744.300" cy="377.800" r="36.900"/><circle cx="744.300" cy="377.800" r="38.100"/></g>
<path d="M744.500 377L744.500 401.300L749.600 397.200L754.200 406.600L758.800 404.300L754.400 395.200L760.800 394.300Z" fill="none" stroke="#fff" stroke-opacity=".75" stroke-width="3" stroke-linejoin="round"/><path d="M744.500 377L744.500 401.300L749.600 397.200L754.200 406.600L758.800 404.300L754.400 395.200L760.800 394.300Z" fill="#fff" stroke="#000" stroke-width="1.200" stroke-linejoin="round"/>
<!-- red border -->
<g shape-rendering="crispEdges"><rect x="95" y="155" width="1043" height="1" fill="#6e0000"/><rect x="95" y="155" width="1" height="577" fill="#800000"/><rect x="1137" y="155" width="1" height="577" fill="#800000"/><rect x="95" y="731" width="1043" height="1" fill="#6e0000"/></g>
</svg>

</div>
<div id="vscroll"><i style="left:4px;top:87px;width:8px;height:329px;border-radius:4px;background:#7f7f7f"></i></div>
<div id="hscroll"><i style="left:183px;top:5px;width:683px;height:8px;border-radius:4px;background:#7f7f7f"></i></div>
<div id="zoomlbl"><span id="zl" style="right:0;top:1px;white-space:nowrap">10 &lt; 100</span></div>

<svg id="ticks" style="left:80px;top:140px;pointer-events:none" width="1075" height="610" viewBox="80 140 1075 610">
<defs>
<linearGradient id="fl" x1="0" x2="1" y1="0" y2="0"><stop offset="0" stop-color="#ff3030" stop-opacity="0"/><stop offset="1" stop-color="#ff3030" stop-opacity=".55"/></linearGradient>
<linearGradient id="fr" x1="0" x2="1" y1="0" y2="0"><stop offset="0" stop-color="#ff3030" stop-opacity=".55"/><stop offset="1" stop-color="#ff3030" stop-opacity="0"/></linearGradient>
<linearGradient id="fu" x1="0" x2="0" y1="0" y2="1"><stop offset="0" stop-color="#ff3030" stop-opacity="0"/><stop offset="1" stop-color="#ff3030" stop-opacity=".55"/></linearGradient>
<linearGradient id="fd" x1="0" x2="0" y1="0" y2="1"><stop offset="0" stop-color="#ff3030" stop-opacity=".55"/><stop offset="1" stop-color="#ff3030" stop-opacity="0"/></linearGradient>
</defs>
<g fill="#ff3030" fill-opacity=".5" shape-rendering="crispEdges"><rect x="94" y="154" width="1045" height="1"/><rect x="94" y="732" width="1045" height="1"/><rect x="94" y="155" width="1" height="577"/><rect x="1138" y="155" width="1" height="577"/></g>
<rect x="85" y="153.700" width="9" height="1.600" fill="url(#fl)"/><rect x="93.900" y="145" width="1.600" height="9" fill="url(#fu)"/>
<rect x="1139" y="153.700" width="9" height="1.600" fill="url(#fr)"/><rect x="1137.600" y="145" width="1.600" height="9" fill="url(#fu)"/>
<rect x="85" y="731.700" width="9" height="1.600" fill="url(#fl)"/><rect x="93.900" y="733" width="1.600" height="9" fill="url(#fd)"/>
<rect x="1139" y="731.700" width="9" height="1.600" fill="url(#fr)"/><rect x="1137.600" y="733" width="1.600" height="9" fill="url(#fd)"/>
</svg>
<!-- COMMAND -->
<div id="cmdhist"><span style="left:5px;top:1px;font-size:13.2px;line-height:16px;color:#0c0cd4;-webkit-text-stroke:.2px #0c0cd4;white-space:nowrap"><i style="position:static;font-style:italic">Commande:</i> line</span></div>
<div id="cmdline">
<span style="left:1px;top:6px;font-size:13.1px;line-height:17px;color:#111;white-space:nowrap;-webkit-text-stroke:.2px #111">Commande :</span>
<i style="left:81px;top:5px;width:973px;height:18px;background:#fff"></i>
<i style="left:1056px;top:2px;width:24px;height:24px;background:linear-gradient(#f7f7f7,#ececec);border:1px solid #bdbdbd"></i>
<svg style="left:1060px;top:8px" width="16" height="12"><rect x=".5" y=".5" width="14" height="10" fill="#fff" stroke="#222" stroke-width="1"/><rect x=".5" y=".5" width="14" height="3" fill="#000"/></svg>

</div>

<!-- RIGHT PANEL -->
<div id="rightpanel">
<div id="rptitle"><span id="rpt" style="left:120.5px;top:1px;white-space:nowrap">Liste des calques</span></div>
<svg style="left:0;top:0" width="299" height="690" viewBox="1155 108 299 690">
<defs>
<linearGradient id="gLB" x1="0" y1="0" x2="0" y2="1"><stop offset="0" stop-color="#f2f2f2"/><stop offset=".15" stop-color="#f8f8f8"/><stop offset="1" stop-color="#ebebeb"/></linearGradient>
<g id="eye"><path d="M-7.200 0q3.400-4.800 7.200-4.800t7.200 4.800q-3.400 4.600-7.200 4.600t-7.200-4.600z"/><circle cx="0" cy="-.1" r="2.700" fill="#fff"/><circle cx="0" cy="-.3" r="1.900"/><circle cx="-.8" cy="-1.100" r=".6" fill="#fff"/><path d="M-7.200-.3q3.400-5.300 7.200-5.300t7.200 5.300" fill="none" stroke-width="1.300" stroke="currentColor"/></g>
<g id="penc"><path d="M0 0l1.800-4.300 10.700-10.700 2.500 2.500-10.700 10.700z" fill="#e9a530" stroke="#9a6a18" stroke-width=".6"/><path d="M11.300-13.800l1.200-1.200 2.500 2.500-1.200 1.200z" fill="#e0362c"/><path d="M0 0l1.800-4.300 2.500 2.500z" fill="#f1d3a6"/><path d="M0 0l.8-1.900 1.100 1.100z" fill="#222"/></g>
</defs>
<rect x="1154.500" y="108" width="1.500" height="690" fill="#b2b2b2"/>
<!-- title buttons -->
<circle cx="1163.900" cy="118.100" r="6.900" fill="#666"/><path d="M1161 115.200l5.800 5.800M1166.800 115.200l-5.800 5.800" stroke="#f2f2f2" stroke-width="2.200"/>
<circle cx="1181.900" cy="118.100" r="6.900" fill="#666"/><rect x="1180.800" y="114.800" width="5" height="4.600" rx=".8" fill="none" stroke="#f2f2f2" stroke-width="1.200"/><rect x="1178.200" y="117" width="5" height="4.600" rx=".8" fill="#666" stroke="#f2f2f2" stroke-width="1.200"/>
<!-- buttons -->
<rect x="1156" y="130.300" width="299" height="26" fill="#b6b6b6"/>
<g><rect x="1156" y="131.500" width="58.300" height="23.700" fill="url(#gLB)"/><rect x="1216" y="131.500" width="58.300" height="23.700" fill="url(#gLB)"/><rect x="1276" y="131.500" width="58.300" height="23.700" fill="url(#gLB)"/><rect x="1336" y="131.500" width="58.300" height="23.700" fill="url(#gLB)"/><rect x="1396" y="131.500" width="58.300" height="23.700" fill="url(#gLB)"/></g>
<g transform="translate(1185,143.300)" fill="#000" color="#000"><use href="#eye"/></g>
<g transform="translate(1245,143.300)" fill="#a9a9a9" color="#a9a9a9"><use href="#eye"/></g>
<path d="M1299.500 143.300h11M1305 137.800v11" stroke="#f01010" stroke-width="2.600"/>
<path d="M1359 143.300h11.500" stroke="#f01010" stroke-width="2.600"/>
<g transform="translate(1417.500,150.500)"><use href="#penc"/></g>
<!-- layer row -->
<rect x="1161.500" y="163.500" width="15" height="8" fill="#fff" stroke="#000" stroke-width="1"/>
<text x="1183" y="171.800" font-family="Liberation Sans, sans-serif" font-size="13" fill="#111">0</text>
<g transform="translate(1394.500,174.500) scale(.9)"><use href="#penc"/></g>
<g transform="translate(1422.700,166.800)" fill="#000" color="#000"><use href="#eye"/></g>
<path d="M1442.200 166.500v-2.500a3 3 0 0 1 6 0v2.500" fill="none" stroke="#b9b9b9" stroke-width="1.300"/><rect x="1440.300" y="166.300" width="9.800" height="7" fill="#b9b9b9"/>
</svg>

</div>
<div id="righttb">
<svg style="left:0;top:0" width="47" height="691" viewBox="1453 107 47 691">
<defs>
<g id="win"><rect x=".5" y=".5" width="27" height="27" fill="#fff" stroke="#333" stroke-width=".9"/><rect x=".5" y=".5" width="27" height="4.300" fill="#000"/><rect x="1" y="1" width="3" height="3" fill="#fff"/></g>
</defs>
<rect x="1454" y="107" width="1" height="691" fill="#c2c2c2"/>
<g fill="#a2a2a2"><rect x="1462" y="116" width="2" height="2"/><rect x="1468" y="116" width="2" height="2"/><rect x="1474" y="116" width="2" height="2"/><rect x="1480" y="116" width="2" height="2"/><rect x="1486" y="116" width="2" height="2"/></g>
<rect x="1456" y="120" width="43" height="42.600" rx="4.500" fill="#b5b5b5"/>
<rect x="1456" y="417" width="43" height="42.300" rx="4.500" fill="#b5b5b5"/>
<use href="#win" x="1463" y="127"/>
<use href="#win" x="1463" y="174"/>
<use href="#win" x="1463" y="220.500"/>
<path d="M1457 261.500h43M1457 409.500h43" stroke="#3c3c3c" stroke-width="1" stroke-dasharray="1 2" shape-rendering="crispEdges"/>
<use href="#win" x="1463" y="276"/>
<use href="#win" x="1463" y="322.300"/>
<use href="#win" x="1463" y="368"/>
<use href="#win" x="1463" y="424"/>
<use href="#win" x="1463" y="471"/>
<!-- icon 1: layers -->
<g fill="none" stroke="#555" stroke-width=".8"><path d="M1470 139.500l6-2.500v9l-6 2.500zM1471.500 139l6-2.500v9l-6 2.500zM1473 138.500l6-2.500v9l-6 2.500z" fill="#ddd"/><path d="M1475 138l7.500-3v9.500l-7.500 3z" fill="#fff"/></g>
<path d="M1477 144.500l3.500-6.500v6z" fill="none" stroke="#e03030" stroke-width=".8"/>
<!-- icon 2: block -->
<rect x="1470.300" y="184.300" width="10" height="7.500" fill="#f5ebc6" stroke="#444" stroke-width=".8"/>
<circle cx="1479.500" cy="191.300" r="4.200" fill="#f5ebc6" stroke="#444" stroke-width=".8"/>
<path d="M1480.300 187.500v4.300h-4.500" fill="none" stroke="#444" stroke-width=".8"/>
<!-- icon 3: view -->
<rect x="1468.500" y="230.500" width="16.500" height="10.500" rx="2" fill="#f6f5f0" stroke="#b9cbe6" stroke-width="1"/>
<!-- icon 4: list -->
<g fill="#000"><rect x="1466" y="284" width="3.600" height="2.600"/><rect x="1466" y="290" width="3.600" height="2.600"/><rect x="1466" y="296" width="3.600" height="2.600"/></g>
<g fill="#fff" stroke="#444" stroke-width=".7"><rect x="1472.500" y="284" width="14.500" height="2.600"/><rect x="1472.500" y="290" width="14.500" height="2.600"/><rect x="1472.500" y="296" width="14.500" height="2.600"/></g>
<!-- icon 5: funnel -->
<path d="M1470 331.500q7-2 14 0l-5.500 6.500v7.500l-3-1.500v-6z" fill="#9c9c9c" stroke="#777" stroke-width=".6"/>
<ellipse cx="1477" cy="331.500" rx="7" ry="1.600" fill="#c9c9c9" stroke="#777" stroke-width=".5"/>
<!-- icon 6: screw -->
<path d="M1469.500 377.500l5 2.500h10.500v7h-10.500l-5 2.500z" fill="#f2f2f2" stroke="#444" stroke-width=".8"/>
<rect x="1476" y="380" width="8" height="7" fill="#8e8e8e"/>
<path d="M1467 383.500h20" stroke="#f0a0b0" stroke-width=".8" stroke-dasharray="3 1.500"/>
<!-- icon 7: command -->
<g stroke="#777" stroke-width=".8"><path d="M1466 432.500h13M1466 436h12M1466 439.500h14M1466 443h15"/></g>
<path d="M1463.500 446.500h27" stroke="#333" stroke-width=".7"/>
<path d="M1466 449h2.500M1472 449h17" stroke="#333" stroke-width="1.600"/>
<!-- icon 8: clipboard -->
<rect x="1470" y="478.500" width="14" height="16.500" rx="1" fill="#b97a20" stroke="#8e5a12" stroke-width=".6"/>
<rect x="1471.800" y="480.300" width="10.400" height="13" fill="#fbfbfb"/>
<path d="M1473.500 483.500h7M1473.500 485.800h7M1473.500 488.100h7M1473.500 490.400h4" stroke="#cfcfcf" stroke-width=".7"/>
<rect x="1474" y="477" width="6" height="3.300" rx=".8" fill="#a9aaa0" stroke="#7d7e74" stroke-width=".5"/>
<path d="M1482.200 490.300v3h-3z" fill="#9a9a9a"/>
</svg>

</div>

<!-- STATUS -->
<div id="status">
<span style="left:2px;top:9px">124.8,65.8</span>
<span style="left:2px;top:29px">@4.8,5.8</span>
<i style="left:253px;top:4px;width:1px;height:40px;background:#888"></i>
<span style="left:256px;top:9px">141.0839&lt;28°</span>
<span style="left:256px;top:29px">@7.5286&lt;50°</span>
<span style="left:532px;top:18.5px;font-size:9.8px;letter-spacing:.2px;-webkit-text-stroke:.25px #111">Sélectionne une entité ou une région</span>
<span style="left:949px;top:18.5px;font-size:9.8px;letter-spacing:.2px;-webkit-text-stroke:.25px #111">Aucune des entités sélectionnées.</span>
<i style="left:506px;top:21px;width:6px;height:6px;border-radius:3px;background:#cbcbcb"></i>
<i style="left:940px;top:21px;width:6px;height:6px;border-radius:3px;background:#cbcbcb"></i>
<i style="left:1269px;top:21px;width:6px;height:6px;border-radius:3px;background:#cbcbcb"></i>
<svg style="left:716px;top:7px" width="20" height="32" viewBox="716 804 20 32">
<rect x="717.500" y="805.500" width="17" height="29" rx="8" fill="#fff" stroke="#222" stroke-width="1"/>
<path d="M717.500 818q8.500-2.500 17 0" fill="none" stroke="#222" stroke-width="1"/>
<path d="M726 805.500v11" stroke="#222" stroke-width=".9"/>
<rect x="724.700" y="807.500" width="2.600" height="6" rx="1.300" fill="#fff" stroke="#222" stroke-width=".9"/>
</svg>

</div>

</div>
</body></html>
